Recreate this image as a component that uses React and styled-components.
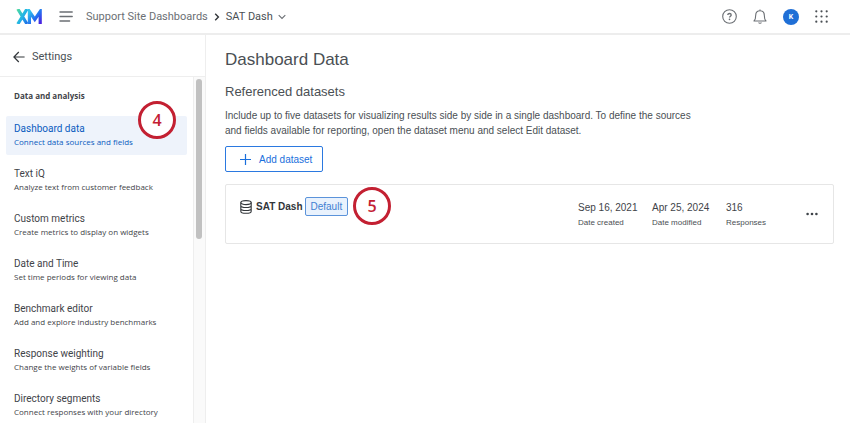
import React from "react";
import styled, { createGlobalStyle } from "styled-components";

const GlobalStyle = createGlobalStyle`
  * {
    box-sizing: border-box;
  }

  body {
    margin: 0;
    background: #fff;
    color: #4a4f54;
    font-family: "Liberation Sans", Arial, sans-serif;
  }

  button {
    padding: 0;
    border: 0;
    background: none;
    color: inherit;
    font: inherit;
    cursor: pointer;
  }

  a {
    color: inherit;
    text-decoration: none;
  }

  svg {
    display: block;
    flex: none;
  }
`;

const Page = styled.div`
  display: flex;
  flex-direction: column;
  height: 100vh;
  overflow: hidden;
`;

const TopBar = styled.header`
  display: flex;
  align-items: center;
  flex: none;
  height: 35px;
  padding: 0 22px 0 16px;
  border-bottom: 2px solid #ededed;
  font-family: Roboto, sans-serif;
`;

const MenuButton = styled.button`
  margin: 0 13px 0 17px;
`;

const Breadcrumbs = styled.nav`
  display: flex;
  align-items: center;
  flex: 1;
  gap: 6px;
  font-size: 11px;
  line-height: 16px;
  color: #6b6f74;
`;

const Current = styled.button`
  display: flex;
  align-items: center;
  gap: 5px;
  color: #4a4f54;
`;

const Tools = styled.div`
  display: flex;
  align-items: center;
  gap: 16px;
`;

const Avatar = styled.button`
  width: 16px;
  height: 16px;
  border-radius: 50%;
  background: #1f6fd6;
  color: #fff;
  font-size: 7px;
  font-weight: 700;
  line-height: 16px;
`;

const Body = styled.div`
  display: flex;
  flex: 1;
  min-height: 0;
`;

const Sidebar = styled.aside`
  display: flex;
  flex-direction: column;
  flex: none;
  width: 206px;
  border-right: 1px solid #eee;
  font-family: Roboto, sans-serif;
`;

const BackLink = styled.a`
  display: flex;
  align-items: center;
  flex: none;
  gap: 7px;
  height: 42px;
  padding: 2px 0 0 13px;
  border-bottom: 1px solid #eee;
  font-size: 11px;
`;

const ScrollArea = styled.div`
  display: flex;
  flex: 1;
  min-height: 0;
`;

const Menu = styled.nav`
  flex: 1;
  padding: 11px 6px 0;
  overflow: hidden;
`;

const MenuTitle = styled.h2`
  margin: 0 8px 12px;
  font-family: "Open Sans", sans-serif;
  font-size: 8px;
  font-weight: 700;
  line-height: 16px;
  color: #3f4449;
`;

const MenuItem = styled.a`
  display: block;
  position: relative;
  height: 39px;
  margin-bottom: 6px;
  padding: 5px 8px 0;
  border-radius: 2px;
  background: ${(props) => (props.$active ? "#eef3fb" : "transparent")};
  color: ${(props) => (props.$active ? "#0b5cc0" : "#3f4449")};
`;

const ItemLabel = styled.span`
  display: block;
  font-size: 10px;
  line-height: 15px;
`;

const ItemHint = styled.span`
  display: block;
  font-family: "Open Sans", sans-serif;
  font-size: 8px;
  line-height: 12px;
`;

const ScrollTrack = styled.div`
  width: 12px;
  padding: 2px 3px 0 2px;
  border-left: 1px solid #eee;
  background: #fafafa;
`;

const ScrollThumb = styled.div`
  height: 160px;
  border-radius: 3px;
  background: #c1c1c1;
`;

const Callout = styled.span`
  position: absolute;
  top: ${(props) => props.$top};
  left: ${(props) => props.$left};
  width: 38px;
  height: 38px;
  border: 3px solid #c32032;
  border-radius: 50%;
  background: #fff;
  color: #c32032;
  font-family: "Open Sans", sans-serif;
  font-size: 16px;
  font-weight: 600;
  line-height: 32px;
  text-align: center;
`;

const Main = styled.main`
  flex: 1;
  min-width: 0;
  padding: 13px 16px 0 19px;
`;

const Title = styled.h1`
  margin: 0;
  font-size: 17px;
  font-weight: 400;
  line-height: 24px;
`;

const SubTitle = styled.h2`
  margin: 11px 0 7px;
  font-size: 13px;
  font-weight: 400;
  line-height: 18px;
`;

const Intro = styled.p`
  max-width: 470px;
  margin: 0 0 8px;
  font-size: 10px;
  line-height: 15px;
`;

const AddButton = styled.button`
  display: flex;
  align-items: center;
  gap: 8px;
  height: 26px;
  padding: 0 10px 0 14px;
  border: 1px solid #2b79e0;
  border-radius: 2px;
  color: #1a6fdc;
  font-size: 10px;
`;

const Card = styled.section`
  display: flex;
  height: 60px;
  margin-top: 12px;
  padding: 0 15px 0 14px;
  border: 1px solid #e6e6e6;
  border-radius: 2px;
`;

const DatasetName = styled.div`
  display: flex;
  align-items: center;
  position: relative;
  height: 19px;
  margin-top: 12px;
`;

const Name = styled.strong`
  margin: 0 2px 0 4px;
  font-size: 10px;
  color: #32363a;
`;

const Badge = styled.span`
  height: 19px;
  padding: 0 5px;
  border: 1px solid #5b93da;
  border-radius: 2px;
  background: #e9f2fd;
  color: #3f7fd2;
  font-size: 10px;
  line-height: 17px;
`;

const Stats = styled.dl`
  display: grid;
  grid-template-columns: 74px 74px 80px;
  margin: 15px 0 0 auto;
`;

const Stat = styled.div`
  display: flex;
  flex-direction: column-reverse;
  justify-content: flex-end;
`;

const StatLabel = styled.dt`
  font-size: 8px;
  line-height: 15px;
`;

const StatValue = styled.dd`
  margin: 0;
  font-size: 10px;
  line-height: 15px;
  color: #3f4449;
`;

const items = [
  { label: "Dashboard data", hint: "Connect data sources and fields" },
  { label: "Text iQ", hint: "Analyze text from customer feedback" },
  { label: "Custom metrics", hint: "Create metrics to display on widgets" },
  { label: "Date and Time", hint: "Set time periods for viewing data" },
  { label: "Benchmark editor", hint: "Add and explore industry benchmarks" },
  { label: "Response weighting", hint: "Change the weights of variable fields" },
  { label: "Directory segments", hint: "Connect responses with your directory" },
];

const stats = [
  { label: "Date created", value: "Sep 16, 2021" },
  { label: "Date modified", value: "Apr 25, 2024" },
  { label: "Responses", value: "316" },
];

const Logo = () => (
  <svg width="26" height="15" viewBox="0 0 26 15" role="img" aria-label="XM">
    <defs>
      <linearGradient id="logo-x" x1="0" y1="0" x2="1" y2="1">
        <stop offset="0" stopColor="#4fd8a0" />
        <stop offset="0.5" stopColor="#21b6e6" />
        <stop offset="1" stopColor="#1f6be8" />
      </linearGradient>
      <linearGradient id="logo-m" x1="0" y1="0" x2="1" y2="1">
        <stop offset="0" stopColor="#2fc4ea" />
        <stop offset="0.5" stopColor="#2474f0" />
        <stop offset="1" stopColor="#4a1fe0" />
      </linearGradient>
    </defs>
    <g fill="none" strokeWidth="3.2">
      <path d="M1.8 0L11 15M11 0L1.8 15" stroke="url(#logo-x)" />
      <path d="M13.4 15V2.5L18.8 10.5L24.2 2.5V15" stroke="url(#logo-m)" />
    </g>
  </svg>
);

const HamburgerIcon = () => (
  <svg width="14" height="11" viewBox="0 0 14 11" stroke="#6b6f74" strokeWidth="1.4" strokeLinecap="round">
    <path d="M1 1H13.2M1 5.5H13.2M1 10H10.6" />
  </svg>
);

const ChevronRight = () => (
  <svg width="6" height="8" viewBox="0 0 6 8" fill="none" stroke="#32363a" strokeWidth="1.4">
    <path d="M1.2 0.8L4.4 4L1.2 7.2" />
  </svg>
);

const ChevronDown = () => (
  <svg width="8" height="6" viewBox="0 0 8 6" fill="none" stroke="#6b6f74" strokeWidth="1.1">
    <path d="M0.7 1.2L4 4.5L7.3 1.2" />
  </svg>
);

const HelpIcon = () => (
  <svg width="15" height="15" viewBox="0 0 15 15" fill="none" stroke="#6b6f74" strokeWidth="1.1">
    <circle cx="7.5" cy="7.5" r="6.8" />
    <path d="M5.8 6C5.8 4 9.2 4 9.2 6C9.2 7.2 7.5 7.2 7.5 8.6" strokeWidth="1.3" />
    <circle cx="7.5" cy="10.4" r="0.8" fill="#6b6f74" stroke="none" />
  </svg>
);

const BellIcon = () => (
  <svg width="14" height="15" viewBox="0 0 14 15" fill="none" stroke="#6b6f74" strokeWidth="1.1">
    <path d="M7 0.4V1.6M1 12C2.2 10.9 2.7 9.6 2.7 6.2C2.7 3.3 4.4 1.7 7 1.7S11.3 3.3 11.3 6.2C11.3 9.6 11.8 10.9 13 12Z" strokeLinejoin="round" />
    <path d="M5.6 13.4C6.1 14.5 7.9 14.5 8.4 13.4" />
  </svg>
);

const GridIcon = () => (
  <svg width="13" height="13" viewBox="0 0 13 13" fill="#4a4f54">
    {[1.3, 6.5, 11.7].map((y) =>
      [1.3, 6.5, 11.7].map((x) => <circle key={`${x}-${y}`} cx={x} cy={y} r="1.1" />)
    )}
  </svg>
);

const BackArrow = () => (
  <svg width="12" height="12" viewBox="0 0 12 12" fill="none" stroke="#32363a" strokeWidth="1.2">
    <path d="M11.6 6H1M5.8 1L0.9 6L5.8 11" />
  </svg>
);

const PlusIcon = () => (
  <svg width="11" height="11" viewBox="0 0 11 11" stroke="#1a6fdc" strokeWidth="1.2">
    <path d="M5.5 0V11M0 5.5H11" />
  </svg>
);

const DatabaseIcon = () => (
  <svg width="12" height="14" viewBox="0 0 12 14" fill="none" stroke="#32363a" strokeWidth="1.1">
    <ellipse cx="6" cy="2.6" rx="5.2" ry="2" />
    <path d="M0.8 2.6V11.2C0.8 14 11.2 14 11.2 11.2V2.6M0.8 5.5C0.8 8.2 11.2 8.2 11.2 5.5M0.8 8.4C0.8 11.1 11.2 11.1 11.2 8.4" />
  </svg>
);

const MoreIcon = () => (
  <svg width="12" height="4" viewBox="0 0 12 4" fill="#3f4449">
    <circle cx="1.6" cy="2" r="1.3" />
    <circle cx="6" cy="2" r="1.3" />
    <circle cx="10.4" cy="2" r="1.3" />
  </svg>
);

const App = () => {
  return (
    <Page>
      <GlobalStyle />
      <TopBar>
        <Logo />
        <MenuButton aria-label="Menu">
          <HamburgerIcon />
        </MenuButton>
        <Breadcrumbs>
          <a href="#dashboards">Support Site Dashboards</a>
          <ChevronRight />
          <Current>
            SAT Dash
            <ChevronDown />
          </Current>
        </Breadcrumbs>
        <Tools>
          <button aria-label="Help">
            <HelpIcon />
          </button>
          <button aria-label="Notifications">
            <BellIcon />
          </button>
          <Avatar>K</Avatar>
          <button aria-label="Apps">
            <GridIcon />
          </button>
        </Tools>
      </TopBar>

      <Body>
        <Sidebar>
          <BackLink href="#back">
            <BackArrow />
            Settings
          </BackLink>
          <ScrollArea>
            <Menu>
              <MenuTitle>Data and analysis</MenuTitle>
              {items.map(({ label, hint }, index) => (
                <MenuItem key={label} href="#settings" $active={index === 0}>
                  <ItemLabel>{label}</ItemLabel>
                  <ItemHint>{hint}</ItemHint>
                  {index === 0 && (
                    <Callout $top="-15px" $left="132px">
                      4
                    </Callout>
                  )}
                </MenuItem>
              ))}
            </Menu>
            <ScrollTrack>
              <ScrollThumb />
            </ScrollTrack>
          </ScrollArea>
        </Sidebar>

        <Main>
          <Title>Dashboard Data</Title>
          <SubTitle>Referenced datasets</SubTitle>
          <Intro>
            Include up to five datasets for visualizing results side by side in a
            single dashboard. To define the sources and fields available for
            reporting, open the dataset menu and select Edit dataset.
          </Intro>
          <AddButton>
            <PlusIcon />
            Add dataset
          </AddButton>

          <Card>
            <DatasetName>
              <DatabaseIcon />
              <Name>SAT Dash</Name>
              <Badge>Default</Badge>
              <Callout $top="-10px" $left="113px">
                5
              </Callout>
            </DatasetName>
            <Stats>
              {stats.map(({ label, value }) => (
                <Stat key={label}>
                  <StatLabel>{label}</StatLabel>
                  <StatValue>{value}</StatValue>
                </Stat>
              ))}
            </Stats>
            <button aria-label="More options">
              <MoreIcon />
            </button>
          </Card>
        </Main>
      </Body>
    </Page>
  );
};

export default App;
